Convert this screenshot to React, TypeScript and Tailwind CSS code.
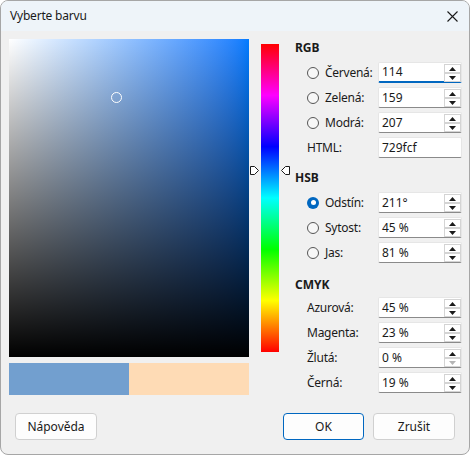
import type { ReactNode } from "react";

const FONT = { fontFamily: '"Noto Sans", "Open Sans", sans-serif' };

function Arrow({ down, disabled }: { down?: boolean; disabled?: boolean }) {
  return (
    <div className="flex-1 flex items-center justify-center bg-white border border-[#d4d4d4]">
      <svg width="7" height="4" viewBox="0 0 7 4">
        <polygon
          points={down ? "0,0 7,0 3.5,4" : "0,4 7,4 3.5,0"}
          fill={disabled ? "#b5b5b5" : "#1a1a1a"}
        />
      </svg>
    </div>
  );
}

function Field({
  value,
  spin = true,
  focused,
  lowDisabled,
}: {
  value: string;
  spin?: boolean;
  focused?: boolean;
  lowDisabled?: boolean;
}) {
  return (
    <div
      className={`relative h-[21px] w-[84px] bg-white border border-[#e6e6e6] rounded-[2px] flex items-center pl-[3px] text-[12px] text-[#1a1a1a] ${
        focused ? "border-b-2 border-b-[#0067c0]" : "border-b-[#8a8a8a]"
      }`}
    >
      {value}
      {spin && (
        <div className="absolute right-[0px] top-[1px] w-[17px] h-[18px] flex flex-col">
          <Arrow />
          <Arrow down disabled={lowDisabled} />
        </div>
      )}
    </div>
  );
}

function Radio({ checked }: { checked?: boolean }) {
  return checked ? (
    <span className="w-[12px] h-[12px] shrink-0 rounded-full bg-[#0067c0] flex items-center justify-center">
      <span className="w-[5px] h-[5px] rounded-full bg-white" />
    </span>
  ) : (
    <span className="w-[12px] h-[12px] shrink-0 rounded-full border border-[#555] bg-[#f7f7f7]" />
  );
}

function Row({ label, radio, checked, children }: { label: string; radio?: boolean; checked?: boolean; children: ReactNode }) {
  return (
    <div className="flex items-center h-[21px] mt-[4px] pl-[12px]">
      <div className="w-[71px] flex items-center gap-[6px] text-[12px] tracking-[-0.25px] text-[#1a1a1a]">
        {radio && <Radio checked={checked} />}
        <span>{label}</span>
      </div>
      {children}
    </div>
  );
}

function Heading({ children, className = "" }: { children: ReactNode; className?: string }) {
  return <div className={`h-[16px] flex items-center text-[12px] font-bold text-[#1a1a1a] ${className}`}>{children}</div>;
}

function Btn({ children, primary, className = "" }: { children: ReactNode; primary?: boolean; className?: string }) {
  return (
    <button
      className={`h-[27px] rounded-[4px] bg-[#fdfdfd] text-[12px] text-[#1a1a1a] border ${
        primary ? "border-[#0067c0]" : "border-[#d0d0d0]"
      } ${className}`}
    >
      {children}
    </button>
  );
}

export default function App() {
  return (
    <div style={FONT} className="w-[470px] h-[455px] rounded-[8px] border border-[#a6a6a6] overflow-hidden bg-[#f0f0f0] flex flex-col">
      <div className="h-[30px] shrink-0 bg-[#eef4f9] flex items-center justify-between pl-[9px] pr-[11px] text-[12px] tracking-[-0.2px] text-[#1a1a1a]">
        <span>Vyberte barvu</span>
        <svg width="11" height="11" viewBox="0 0 11 11">
          <path d="M0.5 0.5 L10.5 10.5 M10.5 0.5 L0.5 10.5" stroke="#1a1a1a" strokeWidth="1.1" />
        </svg>
      </div>

      <div className="flex pl-[8px] pt-[8px]">
        {/* saturation / brightness square + new/old swatches */}
        <div className="w-[240px]">
          <div className="relative h-[318px] bg-linear-to-r from-white to-[#007bff]">
            <div className="absolute inset-0 bg-linear-to-t from-black to-transparent" />
            <div className="absolute left-[102px] top-[53px] w-[11px] h-[11px] rounded-full border border-white" />
          </div>
          <div className="flex h-[32px] mt-[6px]">
            <div className="w-[120px] bg-[#729fcf]" />
            <div className="flex-1 bg-[#fedbb5]" />
          </div>
        </div>

        {/* hue strip with its two pointers */}
        <div className="relative w-[46px]">
          <div className="ml-[12px] mt-[5px] w-[18px] h-[308px] bg-[linear-gradient(to_bottom,#ff0000,#ff00ff,#0000ff,#00ffff,#00ff00,#ffff00,#ff0000)]" />
          <svg className="absolute left-[1px] top-[127px]" width="9" height="9" viewBox="0 0 9 9">
            <path d="M0.5 0.5 H4.5 L8.5 4.5 L4.5 8.5 H0.5 Z" fill="#fff" stroke="#1a1a1a" />
          </svg>
          <svg className="absolute left-[32px] top-[127px]" width="9" height="9" viewBox="0 0 9 9">
            <path d="M8.5 0.5 H4.5 L0.5 4.5 L4.5 8.5 H8.5 Z" fill="#fff" stroke="#1a1a1a" />
          </svg>
        </div>

        <div className="flex-1 pt-[1px]">
          <Heading>RGB</Heading>
          <div className="h-[2px]" />
          <Row label="Červená:" radio>
            <Field value="114" focused />
          </Row>
          <Row label="Zelená:" radio>
            <Field value="159" />
          </Row>
          <Row label="Modrá:" radio>
            <Field value="207" />
          </Row>
          <Row label="HTML:">
            <Field value="729fcf" spin={false} />
          </Row>

          <Heading className="mt-[12px]">HSB</Heading>
          <div className="h-[2px]" />
          <Row label="Odstín:" radio checked>
            <Field value="211°" />
          </Row>
          <Row label="Sytost:" radio>
            <Field value="45 %" />
          </Row>
          <Row label="Jas:" radio>
            <Field value="81 %" />
          </Row>

          <Heading className="mt-[14px]">CMYK</Heading>
          <Row label="Azurová:">
            <Field value="45 %" />
          </Row>
          <Row label="Magenta:">
            <Field value="23 %" />
          </Row>
          <Row label="Žlutá:">
            <Field value="0 %" lowDisabled />
          </Row>
          <Row label="Černá:">
            <Field value="19 %" />
          </Row>
        </div>
      </div>

      <div className="flex items-center px-[14px] mt-[18px]">
        <Btn className="w-[82px]">Nápověda</Btn>
        <div className="flex-1" />
        <Btn primary className="w-[81px]">OK</Btn>
        <Btn className="w-[82px] ml-[9px]">Zrušit</Btn>
      </div>
    </div>
  );
}
